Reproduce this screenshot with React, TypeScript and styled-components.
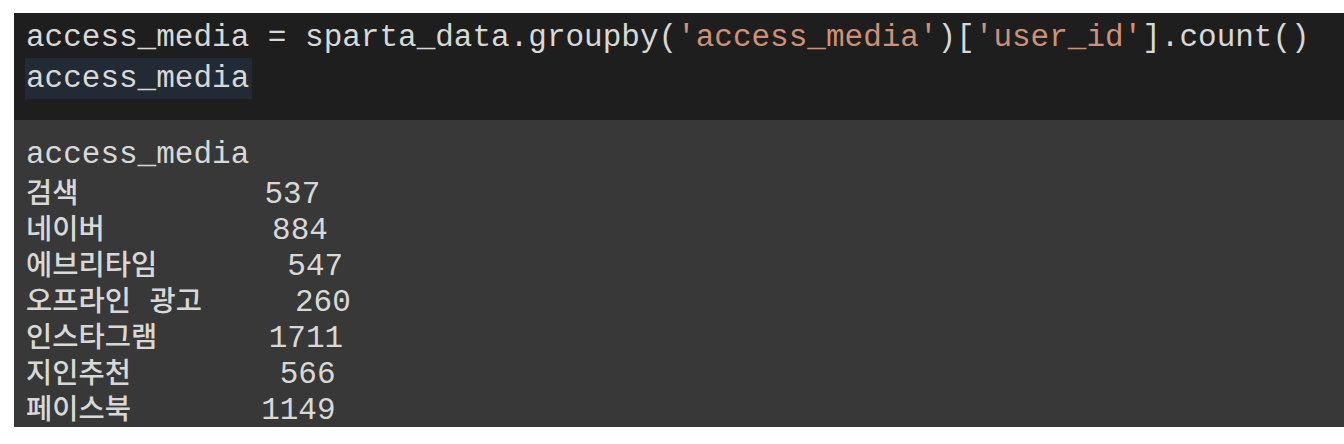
import React from "react";
import styled, { createGlobalStyle } from "styled-components";

const Global = createGlobalStyle`
  html, body { margin: 0; padding: 0; background: #ffffff; }
  body { width: 1344px; height: 444px; overflow: hidden; }
`;

const Page = styled.div`
  padding: 13px 0 0 14px;
`;

const Cell = styled.div`
  display: flex;
  flex-direction: column;
  width: 1330px;
`;

const CodeArea = styled.div`
  background: #1e1e1e;
  padding: 4px 0 21px 12px;
`;

const Line = styled.div<{ $h: number }>`
  font-family: "Liberation Mono", "DejaVu Sans Mono", monospace;
  font-size: 31px;
  line-height: ${(p) => p.$h}px;
  height: ${(p) => p.$h}px;
  color: #d8d8d8;
  white-space: pre;
`;

const Str = styled.span`
  color: #ce9178;
`;

const Highlight = styled.span`
  display: inline-block;
  background: #222a35;
  padding: 0 3px 0 1px;
  margin: -2px 0 0 -1px;
  line-height: 41px;
`;

const Output = styled.div`
  background: #383838;
  padding: 17px 0 2px 12px;
`;

const Label = styled.span`
  font-family: "Noto Sans CJK KR", sans-serif;
  font-size: 28.5px;
  font-weight: 500;
`;

const rows: [string, number][] = [
  ["검색", 537],
  ["네이버", 884],
  ["에브리타임", 547],
  ["오프라인 광고", 260],
  ["인스타그램", 1711],
  ["지인추천", 566],
  ["페이스북", 1149],
];

function renderLabel(label: string) {
  const words = label.split(" ");
  return words.map((w, i) => (
    <React.Fragment key={i}>
      {i > 0 ? " " : null}
      <Label>{w}</Label>
    </React.Fragment>
  ));
}

export default function App() {
  return (
    <Page>
      <Global />
      <Cell>
        <CodeArea>
          <Line $h={41}>
            access_media = sparta_data.groupby(<Str>'access_media'</Str>)[<Str>'user_id'</Str>].count()
          </Line>
          <Line $h={41}>
            <Highlight>access_media</Highlight>
          </Line>
        </CodeArea>
        <Output>
          <Line $h={36}>access_media</Line>
          {rows.map(([label, num]) => {
            const pad = 7 - label.length + 4 + (4 - String(num).length);
            return (
              <Line $h={36} key={label}>
                {renderLabel(label)}
                {" ".repeat(pad)}
                {num}
              </Line>
            );
          })}
        </Output>
      </Cell>
    </Page>
  );
}
